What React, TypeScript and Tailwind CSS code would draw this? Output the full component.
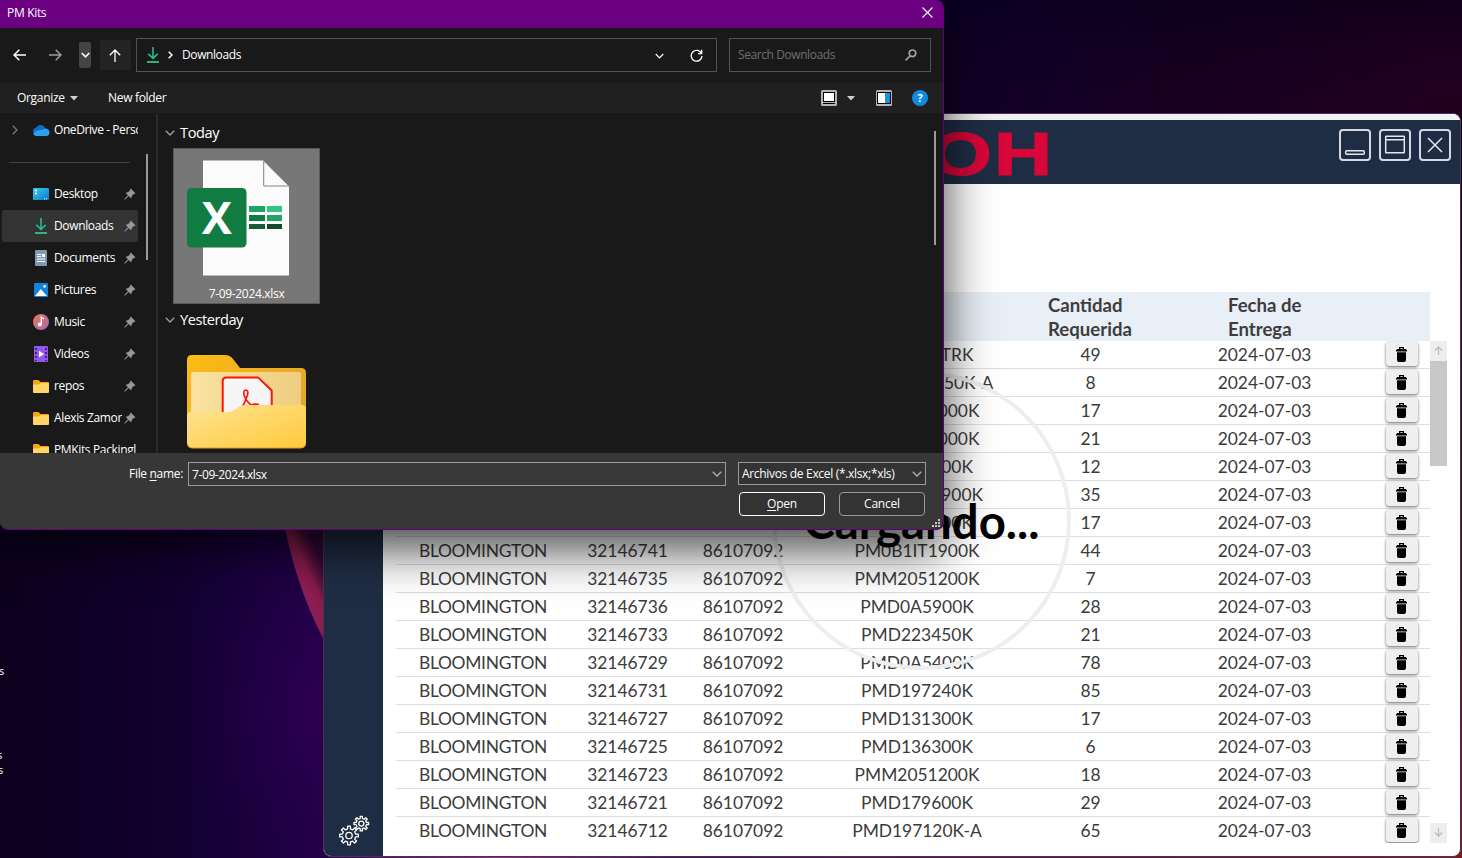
import type { ReactNode } from "react";

type Row = { planta: string; orden: string; cliente: string; parte: string; cantidad: number };

const partes: [string, string, number][] = [
  ["32146750", "PMD1972TRK", 49],
  ["32146749", "PMM20511150K-A", 8],
  ["32146748", "PMM2051000K", 17],
  ["32146746", "PMM2051000K", 21],
  ["32146745", "PMD136300K", 12],
  ["32146743", "PMD20511900K", 35],
  ["32146742", "PMD131300K", 17],
  ["32146741", "PM0B1IT1900K", 44],
  ["32146735", "PMM2051200K", 7],
  ["32146736", "PMD0A5900K", 28],
  ["32146733", "PMD223450K", 21],
  ["32146729", "PMD0A5400K", 78],
  ["32146731", "PMD197240K", 85],
  ["32146727", "PMD131300K", 17],
  ["32146725", "PMD136300K", 6],
  ["32146723", "PMM2051200K", 18],
  ["32146721", "PMD179600K", 29],
  ["32146712", "PMD197120K-A", 65],
];

const rows: Row[] = partes.map(([orden, parte, cantidad]) => ({
  planta: "BLOOMINGTON",
  orden,
  cliente: "86107092",
  parte,
  cantidad,
}));

const columns = "grid grid-cols-[174px_115px_116px_232px_115px_233px_49px]";

function gearPath(cx: number, cy: number, outer: number, inner: number, teeth: number) {
  const pts: string[] = [];
  const step = (Math.PI * 2) / teeth;
  for (let i = 0; i < teeth; i++) {
    const a = i * step - Math.PI / 2;
    const corners: [number, number][] = [
      [-0.27, inner],
      [-0.19, outer],
      [0.19, outer],
      [0.27, inner],
    ];
    for (const [k, r] of corners) {
      pts.push(`${(cx + r * Math.cos(a + k * step)).toFixed(2)} ${(cy + r * Math.sin(a + k * step)).toFixed(2)}`);
    }
  }
  return `M${pts.join("L")}Z`;
}

function Gears() {
  return (
    <svg width="32" height="32" viewBox="0 0 32 32" fill="none" stroke="#fff" strokeWidth="1.3" strokeLinejoin="round">
      <path d={gearPath(11, 20.5, 9.4, 6.7, 8)} />
      <circle cx="11" cy="20.5" r="3.2" />
      <path d={gearPath(23.3, 8.6, 7.4, 5.2, 8)} />
      <circle cx="23.3" cy="8.6" r="2.5" />
    </svg>
  );
}

function Wallpaper() {
  return (
    <svg className="absolute inset-0" width="1462" height="858" viewBox="0 0 1462 858">
      <defs>
        <linearGradient id="wpBase" x1="0" x2="1" y1="0" y2="0">
          <stop offset="0" stopColor="#0b001e" />
          <stop offset="0.12" stopColor="#12002f" />
          <stop offset="0.18" stopColor="#1b0041" />
          <stop offset="0.23" stopColor="#26004a" />
          <stop offset="1" stopColor="#6b1226" />
        </linearGradient>
        <radialGradient id="wpGlow" gradientUnits="userSpaceOnUse" cx="330" cy="710" r="150">
          <stop offset="0" stopColor="#3a005c" stopOpacity="0.5" />
          <stop offset="1" stopColor="#26004a" stopOpacity="0" />
        </radialGradient>
        <linearGradient id="wpTop" gradientUnits="userSpaceOnUse" x1="944" y1="30" x2="1420" y2="150">
          <stop offset="0" stopColor="#0d002b" />
          <stop offset="0.45" stopColor="#130020" />
          <stop offset="1" stopColor="#20001a" />
        </linearGradient>
        <linearGradient id="wpTopShade" x1="0" x2="0" y1="0" y2="1">
          <stop offset="0" stopColor="#05001a" stopOpacity="0.5" />
          <stop offset="1" stopColor="#25002c" stopOpacity="0.2" />
        </linearGradient>
        <linearGradient id="wpEdge" x1="0" x2="0" y1="0" y2="1">
          <stop offset="0" stopColor="#20001a" />
          <stop offset="0.5" stopColor="#43101f" />
          <stop offset="1" stopColor="#7c1728" />
        </linearGradient>
        <linearGradient id="wpRibbon" gradientUnits="userSpaceOnUse" x1="294" y1="574" x2="322" y2="562">
          <stop offset="0" stopColor="#8c1f5c" />
          <stop offset="0.45" stopColor="#8a1c4a" />
          <stop offset="0.75" stopColor="#55103c" />
          <stop offset="1" stopColor="#300838" />
        </linearGradient>
        <linearGradient id="wpFloor" x1="0" x2="1" y1="0" y2="0">
          <stop offset="0" stopColor="#300058" />
          <stop offset="0.15" stopColor="#a0288a" />
          <stop offset="0.3" stopColor="#401058" />
          <stop offset="1" stopColor="#7c1728" />
        </linearGradient>
      </defs>
      <rect width="1462" height="858" fill="url(#wpBase)" />
      <rect x="150" y="530" width="190" height="328" fill="url(#wpGlow)" />
      <path d="M280 500Q292 580 325 642V500Z" fill="url(#wpRibbon)" />
      <rect x="930" width="532" height="130" fill="url(#wpTop)" />
      <rect x="930" width="532" height="114" fill="url(#wpTopShade)" />
      <rect x="1458" y="120" width="4" height="738" fill="url(#wpEdge)" />
      <rect x="330" y="855" width="1132" height="3" fill="url(#wpFloor)" />
    </svg>
  );
}

function WindowButton({ children }: { children: ReactNode }) {
  return (
    <button className="flex size-8 items-center justify-center rounded-[4px] border-2 border-[#d5d9df]">
      <svg width="28" height="28" viewBox="0 0 28 28" fill="none" stroke="#e4e7eb" strokeWidth="1.5">
        {children}
      </svg>
    </button>
  );
}

function TrashButton() {
  return (
    <button className="mt-px ml-[5px] flex h-[24px] w-8 items-center justify-center rounded-[3px] bg-[#efefef] pr-px shadow-[0_1px_3px_rgba(0,0,0,0.6)]">
      <svg width="11" height="15" viewBox="0 0 11 15" className="mt-px">
        <path d="M3 0h5v2h2.2v1H11v1.5H0V3h.8V2H3zM4.2 1.2V2h2.6v-.8z" fill="#000" fillRule="evenodd" />
        <path d="M1 5.3h9V13q0 2-2 2H3q-2 0-2-2z" fill="#000" />
      </svg>
    </button>
  );
}

function ScrollArrow({ down = false }: { down?: boolean }) {
  return (
    <div className="flex h-5 w-[17px] shrink-0 items-center justify-center bg-[#eeeeee] pr-px pb-[2px]">
      <svg width="9" height="9" viewBox="0 0 9 9" fill="none" stroke="#bdbdbd" strokeWidth="1.3" className={down ? "rotate-180" : ""}>
        <path d="M4.5 9V1M1 4.5L4.5 1L8 4.5" />
      </svg>
    </div>
  );
}

function AppWindow() {
  return (
    <div className="absolute top-[113px] left-[323px] flex h-[744px] w-[1138px] flex-col overflow-hidden rounded-[8px] border border-[#4a3350] bg-white">
      <div className="h-[6px] shrink-0 bg-[#f2f2f2]" />
      <header className="flex h-16 shrink-0 items-start justify-between bg-[#1f2d44] pr-[9px]">
        <div className="ml-[428px] flex h-16 w-[298px] justify-end">
          <span className="origin-right translate-x-[4px] translate-y-[1px] scale-x-[1.32] font-['Liberation_Sans',sans-serif] text-[61px] leading-[66px] font-bold tracking-[1.5px] text-[#d80639] [-webkit-text-stroke:1.2px_#d80639]">
            RICOH
          </span>
        </div>
        <div className="mt-[9px] flex gap-2">
          <WindowButton>
            <rect x="4.7" y="19.7" width="18.6" height="3.6" rx="1" />
          </WindowButton>
          <WindowButton>
            <rect x="4.7" y="5.2" width="18.6" height="16.6" rx="0.5" />
            <path d="M5 8.7h18" />
          </WindowButton>
          <WindowButton>
            <path d="M7 7l14 14M21 7L7 21" />
          </WindowButton>
        </div>
      </header>
      <div className="flex min-h-0 flex-1">
        <aside className="flex w-[59px] shrink-0 flex-col justify-end bg-[#1f2d44] pb-[9px] pl-[14px]">
          <Gears />
        </aside>
        <main className="flex min-w-0 flex-1 flex-col pt-[108px] pl-[13px] font-['Lato',sans-serif] text-[#3b3b3b]">
          <div className={`${columns} h-[49px] w-[1034px] shrink-0 bg-[#e8eff6] text-[18.6px] leading-6 font-bold text-[#3d3d3d]`}>
            <div className="col-start-5 pt-[0.5px] pl-[15px] whitespace-pre-line">{"Cantidad\nRequerida"}</div>
            <div className="col-start-6 pt-[0.5px] pl-[80px] whitespace-pre-line">{"Fecha de\nEntrega"}</div>
          </div>
          <div className="flex h-[502px] overflow-hidden">
            <div className="w-[1034px] shrink-0">
              {rows.map((r) => (
                <div key={r.orden} className={`${columns} h-7 border-b border-[#dedede] text-center text-[17.4px] leading-[28px]`}>
                  <div className="tracking-[-0.3px]">{r.planta}</div>
                  <div>{r.orden}</div>
                  <div>{r.cliente}</div>
                  <div>{r.parte}</div>
                  <div>{r.cantidad}</div>
                  <div>2024-07-03</div>
                  <TrashButton />
                </div>
              ))}
            </div>
            <div className="flex w-[17px] flex-col">
              <ScrollArrow />
              <div className="h-[105px] bg-[#c8c8c8]" />
              <div className="flex-1" />
              <ScrollArrow down />
            </div>
          </div>
        </main>
      </div>
      <div className="absolute top-[257px] left-[448px] flex size-[299px] items-center justify-center rounded-full border-4 border-[#eeeeee]">
        <span className="font-['Lato',sans-serif] text-[47.3px] leading-[56px] font-bold text-black">Cargando...</span>
      </div>
    </div>
  );
}

function DownloadIcon({ className }: { className?: string }) {
  return (
    <svg width="12" height="16" viewBox="0 0 12 16" fill="none" className={className}>
      <path d="M6 0V11M1.3 6.8L6 11.3L10.7 6.8" stroke="#27b894" strokeWidth="1.6" />
      <path d="M0 15h12" stroke="#30c486" strokeWidth="1.8" />
    </svg>
  );
}

function Chevron({ className }: { className?: string }) {
  return (
    <svg width="10" height="6" viewBox="0 0 10 6" fill="none" stroke="currentColor" strokeWidth="1.3" className={`shrink-0 ${className ?? ""}`}>
      <path d="M0.8 0.8L5 5L9.2 0.8" />
    </svg>
  );
}

function Pin() {
  return (
    <svg width="12" height="12" viewBox="0 0 12 12" className="shrink-0">
      <path d="M6.7 0.6L11.4 5.3L10.3 6.2L9.4 6L7.8 8.2Q7.9 9.4 7 10.2L4.7 7.9L1.1 11.4L0.5 11.4V10.8L4 7.2L1.8 5Q2.6 4.1 3.8 4.2L6 2.6L5.8 1.7Z" fill="#8f9ba3" />
    </svg>
  );
}

function SmallFolder() {
  return (
    <svg width="16" height="13" viewBox="0 0 16 13">
      <path d="M0 1Q0 0 1 0H5.5L7.5 2H15Q16 2 16 3V6H0Z" fill="#f3a90c" />
      <path d="M0 4.5H6L7.8 3.2H16V12Q16 13 15 13H1Q0 13 0 12Z" fill="#ffd567" />
    </svg>
  );
}

const places: { name: string; icon: ReactNode; active?: boolean; pinned?: boolean }[] = [
  {
    name: "Desktop",
    pinned: true,
    icon: (
      <svg width="16" height="12" viewBox="0 0 16 12">
        <defs>
          <linearGradient id="desk" x1="0" x2="1" y1="0" y2="1">
            <stop offset="0" stopColor="#35d0ee" />
            <stop offset="1" stopColor="#0b78c6" />
          </linearGradient>
        </defs>
        <rect width="16" height="12" rx="1" fill="url(#desk)" />
        <path d="M2 2.5h2M2 5.5h2" stroke="#fff" strokeWidth="1.4" />
        <path d="M11 10.8h1M13 10.8h1" stroke="#fff" />
      </svg>
    ),
  },
  { name: "Downloads", pinned: true, active: true, icon: <DownloadIcon /> },
  {
    name: "Documents",
    pinned: true,
    icon: (
      <svg width="12" height="16" viewBox="0 0 12 16">
        <rect width="12" height="16" rx="1" fill="#7f98b4" />
        <path d="M2 4.5h4M2 6.5h4M2 9h8M2 11.5h8" stroke="#fff" strokeWidth="1.1" />
        <rect x="7" y="4" width="3" height="3" fill="#fff" />
      </svg>
    ),
  },
  {
    name: "Pictures",
    pinned: true,
    icon: (
      <svg width="14" height="14" viewBox="0 0 14 14">
        <rect width="14" height="14" rx="1" fill="#1282d8" />
        <path d="M1 13L6.8 6L13 13Z" fill="#fff" />
        <circle cx="10.6" cy="3.4" r="1.3" fill="#fff" />
      </svg>
    ),
  },
  {
    name: "Music",
    pinned: true,
    icon: (
      <svg width="16" height="16" viewBox="0 0 16 16">
        <defs>
          <linearGradient id="mus" x1="0" x2="1" y1="0" y2="1">
            <stop offset="0" stopColor="#ee7a58" />
            <stop offset="1" stopColor="#a765b5" />
          </linearGradient>
        </defs>
        <circle cx="8" cy="8" r="8" fill="url(#mus)" />
        <circle cx="6.8" cy="10.6" r="2" fill="#fff" />
        <path d="M8.3 10.6V3.2L11 5" stroke="#fff" strokeWidth="1.4" fill="none" />
      </svg>
    ),
  },
  {
    name: "Videos",
    pinned: true,
    icon: (
      <svg width="14" height="16" viewBox="0 0 14 16">
        <rect width="14" height="16" rx="1" fill="#9457e8" />
        <path d="M2 2v13M12 2v13" stroke="#3f1c80" strokeWidth="1.8" strokeDasharray="2 2" />
        <path d="M5 4.8L10.2 8L5 11.2Z" fill="#fff" />
      </svg>
    ),
  },
  { name: "repos", pinned: true, icon: <SmallFolder /> },
  { name: "Alexis Zamora", pinned: true, icon: <SmallFolder /> },
  { name: "PMKits Packingl", icon: <SmallFolder /> },
];

function Sidebar() {
  return (
    <div className="flex w-[156px] shrink-0 overflow-hidden">
      <div className="w-[138px] shrink-0 overflow-hidden">
        <div className="flex h-8 items-center">
          <Chevron className="ml-[10px] -rotate-90 text-[#7a7a7a]" />
          <svg width="17" height="11" viewBox="0 0 17 11" className="ml-[13px] shrink-0">
            <path d="M4 9Q0 9 0 6Q.3 3.2 3 3Q4.500 0 7.600 0Q11 0 12 3.200Q15 3.300 16 6Q17 10 13 11H4Z" fill="#0f6cc4" />
            <path d="M3 11Q0 10.400 .5 8Q2 5.500 8 5L12.500 3.500Q16.500 4.200 16.500 7.500Q16.300 11 13 11Z" fill="#27a3ee" />
          </svg>
          <span className="ml-[4px] w-[85px] shrink-0 overflow-hidden tracking-[-0.42px] whitespace-nowrap">OneDrive - Personal</span>
        </div>
        <div className="mt-[16px] mb-[15px] ml-[9px] h-px w-[121px] bg-[#404040]" />
        {places.map((p) => (
          <div key={p.name} className={`ml-[2px] flex h-8 w-[136px] items-center rounded-[2px] ${p.active ? "bg-[#333333]" : ""}`}>
            <div className="ml-[31px] flex w-4 shrink-0 justify-center">{p.icon}</div>
            <span className={`ml-[5px] shrink-0 overflow-hidden tracking-[-0.36px] whitespace-nowrap ${p.pinned ? "mr-[2px] w-[68px]" : "w-[84px]"}`}>{p.name}</span>
            {p.pinned && <Pin />}
          </div>
        ))}
      </div>
      <div className="mt-[40px] ml-[8px] h-[106px] w-[2px] bg-[#9a9a9a]" />
    </div>
  );
}

function ExcelIcon() {
  return (
    <svg width="104" height="117" viewBox="0 0 104 117" className="ml-[13px]">
      <path d="M16 0.500H76.500L102 26.500V115.500H16Z" fill="#fbfbfb" />
      <path d="M77 0H103V26Z" fill="#777" />
      <path d="M76.700 1V26H102Z" fill="#fbfbfb" stroke="#858585" strokeWidth="1" />
      <rect x="62" y="46" width="16" height="6" fill="#21a366" />
      <rect x="80" y="46" width="15" height="6" fill="#33c481" />
      <rect x="62" y="55" width="16" height="6" fill="#107c41" />
      <rect x="80" y="55" width="15" height="6" fill="#21a366" />
      <rect x="62" y="64" width="16" height="5" fill="#185c37" />
      <rect x="80" y="64" width="15" height="5" fill="#134a2c" />
      <rect y="28" width="59.500" height="59.500" rx="4.500" fill="#107c41" />
      <text x="29.700" y="74" textAnchor="middle" fill="#fff" className="font-['Open_Sans',sans-serif] text-[45px] font-bold">X</text>
    </svg>
  );
}

function PdfFolder() {
  return (
    <svg width="120" height="94" viewBox="0 0 120 94">
      <defs>
        <linearGradient id="fback" x1="0" x2="1" y1="0" y2="0.400">
          <stop offset="0" stopColor="#fdbb14" />
          <stop offset="1" stopColor="#e6a82a" />
        </linearGradient>
        <linearGradient id="finner" x1="0" x2="1">
          <stop offset="0" stopColor="#f9e2a2" />
          <stop offset="1" stopColor="#efcd80" />
        </linearGradient>
        <linearGradient id="ffront" x1="0" x2="1" y1="0" y2="1">
          <stop offset="0" stopColor="#ffe494" />
          <stop offset="1" stopColor="#ffc93a" />
        </linearGradient>
      </defs>
      <path d="M0 5Q0 0 5 0H38Q43 0 46 4L53 13H114Q119 13 119 18V80H0Z" fill="url(#fback)" />
      <rect x="4" y="17" width="110" height="60" rx="2" fill="url(#finner)" />
      <path d="M35.700 70V26Q35.700 22.400 39.500 22.400H71L84.700 35.500V70Z" fill="#f5f5f5" stroke="#fb1408" strokeWidth="2" />
      <path d="M53 56Q57.500 49 60.500 40Q61.500 35 58.800 35Q56.200 35 57 40Q59 46 64 50Q68 48.500 72 49.500" fill="none" stroke="#fb1408" strokeWidth="1.700" />
      <path d="M0 61Q0 57 4 57H41Q46 57 50 53Q53 50 58 50H115Q119 50 119 54V88Q119 93 114 93H5Q0 93 0 88Z" fill="url(#ffront)" />
      <path d="M1 90Q2 93 5 93H114Q117 93 118 90" fill="none" stroke="#d9a325" strokeWidth="1" />
    </svg>
  );
}

function FileList() {
  return (
    <div className="flex min-w-0 flex-1 border-l-2 border-[#2b2b2b]">
      <div className="flex-1 pl-[7px]">
        <div className="mt-[7px] flex h-6 items-center text-[14.6px] tracking-[-0.4px]">
          <Chevron className="text-[#a0a0a0]" />
          <span className="ml-[5px]">Today</span>
        </div>
        <div className="mt-[3px] ml-[8px] flex h-[156px] w-[147px] flex-col border border-[#5a5a5a] bg-[#777777] pt-[11px]">
          <ExcelIcon />
          <span className="mt-[9px] text-center leading-4">7-09-2024.xlsx</span>
        </div>
        <div className="mt-[4px] flex h-6 items-center text-[14.6px] tracking-[-0.45px]">
          <Chevron className="text-[#a0a0a0]" />
          <span className="ml-[5px]">Yesterday</span>
        </div>
        <div className="mt-[23px] ml-[22px]">
          <PdfFolder />
        </div>
      </div>
      <div className="mt-[17px] mr-[7px] h-[114px] w-[2px] bg-[#9a9a9a]" />
    </div>
  );
}

function FileDialog() {
  return (
    <div className="absolute top-0 left-0 flex h-[530px] w-[944px] flex-col overflow-hidden rounded-tr-[8px] rounded-b-[8px] border-r border-b border-[#64007c] bg-[#191919] font-['Open_Sans','Noto_Sans',sans-serif] text-[12px] tracking-[-0.32px] text-white shadow-[0_18px_50px_rgba(0,0,0,0.75)]">
      <div className="flex h-7 shrink-0 items-center justify-between bg-[#6b0081] pr-[10px] pb-[3px] pl-[7px]">
        <span>PM Kits</span>
        <svg width="11" height="11" viewBox="0 0 11 11" stroke="#fff" strokeWidth="1.1">
          <path d="M0.500 0.500L10.500 10.500M10.500 0.500L0.500 10.500" />
        </svg>
      </div>
      <div className="flex h-[55px] shrink-0 items-center pb-px">
        <svg width="13" height="12" viewBox="0 0 13 12" fill="none" stroke="#fff" strokeWidth="1.500" className="ml-[13px]">
          <path d="M13 6H1M6.300 0.800L1 6L6.300 11.200" />
        </svg>
        <svg width="13" height="12" viewBox="0 0 13 12" fill="none" stroke="#9c9c9c" strokeWidth="1.500" className="ml-[23px]">
          <path d="M0 6H12M6.700 0.800L12 6L6.700 11.200" />
        </svg>
        <div className="ml-[17px] flex h-[26px] w-[12px] items-center justify-center rounded-[2px] bg-[#444444]">
          <svg width="9" height="6" viewBox="0 0 10 6" fill="none" stroke="#fff" strokeWidth="1.700">
            <path d="M0.800 0.800L5 5L9.200 0.800" />
          </svg>
        </div>
        <div className="ml-[9px] flex h-[30px] w-[31px] items-center justify-center rounded-[2px] bg-[#232323] pr-[2px]">
          <svg width="12" height="13" viewBox="0 0 12 13" fill="none" stroke="#fff" strokeWidth="1.300">
            <path d="M6 13V1M0.800 6.300L6 1L11.200 6.300" />
          </svg>
        </div>
        <div className="ml-[5px] flex h-[34px] w-[581px] items-center border border-[#535353]">
          <DownloadIcon className="ml-[10px]" />
          <svg width="5" height="8" viewBox="0 0 5 8" fill="none" stroke="#fff" strokeWidth="1.500" className="ml-[9px]">
            <path d="M0.700 0.700L4 4L0.700 7.300" />
          </svg>
          <span className="ml-[9px] tracking-[-0.4px]">Downloads</span>
          <Chevron className="mt-px ml-auto w-[9px] text-white" />
          <svg width="13" height="13" viewBox="0 0 13 13" fill="none" stroke="#fff" strokeWidth="1.300" className="mt-px mr-[13px] ml-[26px]">
            <path d="M11.500 4.500A5.400 5.400 0 1 0 12 7M11.700 0.800V4.600H8" />
          </svg>
        </div>
        <div className="ml-[12px] flex h-[34px] w-[202px] items-center justify-between border border-[#535353] pr-[13px] pl-[8px]">
          <span className="tracking-[-0.42px] text-[#6f6f6f]">Search Downloads</span>
          <svg width="12" height="12" viewBox="0 0 12 12" fill="none" stroke="#a2a2a2" strokeWidth="1.700">
            <circle cx="7.500" cy="4.300" r="3.300" />
            <path d="M5 7L0.600 11.300" />
          </svg>
        </div>
      </div>
      <div className="flex h-[30px] shrink-0 items-center bg-[#202020] pl-[17px]">
        <span className="w-[47px]">Organize</span>
        <svg width="8" height="5" viewBox="0 0 8 5" className="ml-[6px]"><path d="M0 0H8L4 4.500Z" fill="#d0d0d0" /></svg>
        <span className="ml-[30px]">New folder</span>
        <svg width="16" height="16" viewBox="0 0 16 16" className="ml-auto">
          <rect width="16" height="16" rx="1.500" fill="#b5b5b5" />
          <rect x="2" y="2" width="12" height="12" fill="#000" />
          <rect x="3" y="3" width="10" height="8" fill="#fff" />
          <path d="M2 12.500h12" stroke="#b5b5b5" />
        </svg>
        <svg width="8" height="5" viewBox="0 0 8 5" className="ml-[10px]"><path d="M0 0H8L4 4.500Z" fill="#d0d0d0" /></svg>
        <svg width="16" height="16" viewBox="0 0 16 16" className="ml-[21px]">
          <rect width="16" height="16" rx="1.500" fill="#b5b5b5" />
          <rect x="1" y="2" width="14" height="12" fill="#000" />
          <rect x="2" y="3" width="7" height="10" fill="#fff" />
          <rect x="9" y="3" width="5" height="10" fill="#1893e2" />
        </svg>
        <div className="mr-[15px] ml-[20px] flex size-4 items-center justify-center rounded-full bg-[#0f8ade] text-[11px] font-bold">?</div>
      </div>
      <div className="flex min-h-0 flex-1 overflow-hidden border-t border-[#181818]">
        <Sidebar />
        <FileList />
      </div>
      <div className="flex h-[76px] shrink-0 flex-col bg-[#373737] pt-[9px]">
        <div className="flex h-[24px] items-start">
          <span className="w-[188px] pr-[5px] text-right leading-[24px]">
            File <span className="underline underline-offset-2">n</span>ame:
          </span>
          <div className="flex h-[24px] w-[538px] items-center justify-between border border-[#9a9a9a] bg-[#383838] pr-[3px] pl-[3px]">
            <span className="pt-px tracking-[-0.4px]">7-09-2024.xlsx</span>
            <Chevron className="text-[#b0b0b0]" />
          </div>
          <div className="ml-[12px] flex h-[23px] w-[188px] items-center justify-between border border-[#9a9a9a] bg-[#333333] pr-[3px] pl-[3px]">
            <span>Archivos de Excel (*.xlsx;*xls)</span>
            <Chevron className="text-[#b0b0b0]" />
          </div>
        </div>
        <div className="mt-[6px] flex h-[24px] justify-end gap-[14px] pr-[18px]">
          <button className="w-[86px] rounded-[4px] border border-white bg-[#333333] tracking-[-0.25px]">
            <span className="underline underline-offset-2">O</span>pen
          </button>
          <button className="w-[86px] rounded-[4px] border border-[#9a9a9a] bg-[#333333] tracking-[-0.2px]">Cancel</button>
        </div>
        <svg width="8" height="8" viewBox="0 0 8 8" className="mt-[3px] mr-[3px] self-end" fill="#c4c4c4">
          <path d="M6 0h2v2H6zM3 3h2v2H3zM6 3h2v2H6zM0 6h2v2H0zM3 6h2v2H3zM6 6h2v2H6z" />
        </svg>
      </div>
    </div>
  );
}

function DesktopLabel({ className }: { className: string }) {
  return <span className={`absolute font-['Open_Sans',sans-serif] text-[11px] leading-[14px] text-white ${className}`}>s</span>;
}

export default function App() {
  return (
    <div className="relative h-[858px] w-[1462px] overflow-hidden bg-[#0b001e]">
      <Wallpaper />
      <DesktopLabel className="top-[664px] -left-px" />
      <DesktopLabel className="top-[748px] -left-[3px]" />
      <DesktopLabel className="top-[763px] -left-[2px]" />
      <AppWindow />
      <FileDialog />
    </div>
  );
}
